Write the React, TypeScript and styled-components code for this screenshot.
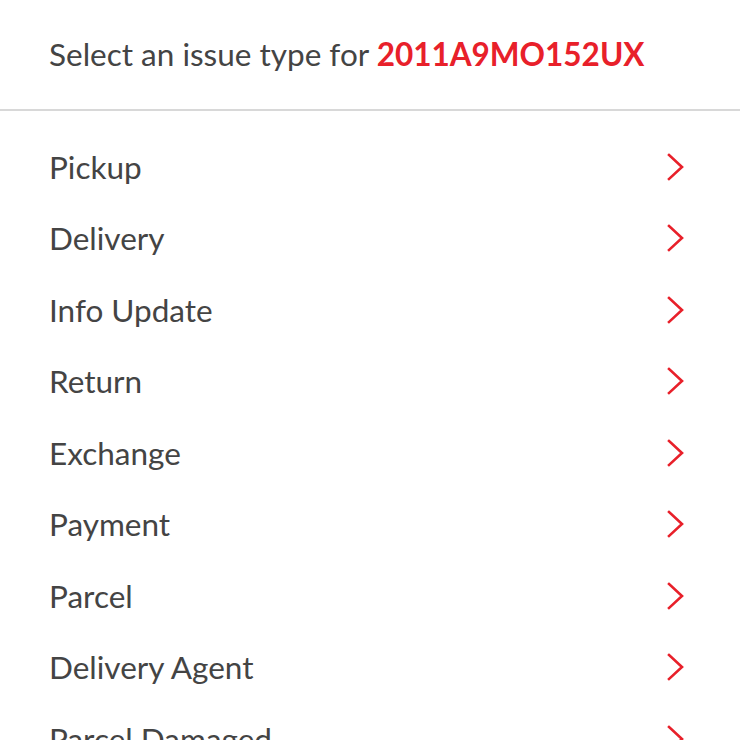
import styled, { createGlobalStyle } from 'styled-components'

const GlobalStyle = createGlobalStyle`
  body {
    margin: 0;
    background: #fff;
    font-family: Lato, "Open Sans", sans-serif;
  }
`

const Page = styled.main`
  width: 740px;
  height: 740px;
  overflow: hidden;
  background: #fff;
`

const Header = styled.header`
  padding: 33px 49px 34px;
  border-bottom: 2px solid #d8d8d8;
  font-size: 31.5px;
  line-height: 42px;
  color: #444;
`

const Code = styled.span`
  color: #e8202a;
  font-weight: 700;
`

const List = styled.ul`
  list-style: none;
  margin: 0;
  padding: 20px 0 0;
`

const Row = styled.li`
  display: flex;
  align-items: center;
  justify-content: space-between;
  height: 71.5px;
  padding: 0 54px 0 49px;
  font-size: 31.5px;
  color: #444;
  cursor: pointer;
`

const Chevron = () => (
  <svg width="20" height="28" viewBox="0 0 20 28" fill="none">
    <path d="M3 2 L16 14 L3 26" stroke="#e8202a" strokeWidth="2.6" strokeLinecap="square" strokeLinejoin="miter" />
  </svg>
)

const issueTypes = [
  'Pickup',
  'Delivery',
  'Info Update',
  'Return',
  'Exchange',
  'Payment',
  'Parcel',
  'Delivery Agent',
  'Parcel Damaged',
]

export default function App() {
  return (
    <Page>
      <GlobalStyle />
      <Header>
        Select an issue type for <Code>2011A9MO152UX</Code>
      </Header>
      <List>
        {issueTypes.map(type => (
          <Row key={type}>
            <span>{type}</span>
            <Chevron />
          </Row>
        ))}
      </List>
    </Page>
  )
}
